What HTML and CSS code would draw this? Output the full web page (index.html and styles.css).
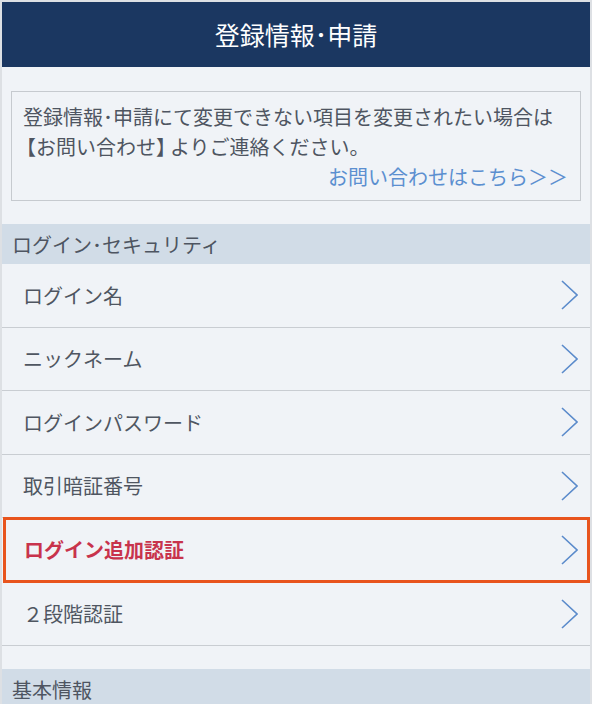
FILE: index.html
```html
<!DOCTYPE html>
<html lang="ja">
<head>
<meta charset="utf-8">
<title>登録情報・申請</title>
<link rel="stylesheet" href="styles.css">
</head>
<body>
<div class="frame">
  <header class="topbar">
    <h1 class="title">登録情報･申請</h1>
  </header>
  <main class="content">
    <div class="notice">
      <p class="notice-text">登録情報･申請にて変更できない項目を変更されたい場合は<span class="br-open">【</span>お問い合わせ<span class="br-close">】</span>よりご連絡ください。</p>
      <p class="notice-link"><a href="#">お問い合わせはこちら＞＞</a></p>
    </div>

    <div class="section-head">ログイン･セキュリティ</div>
    <ul class="menu">
      <li class="row"><span class="label">ログイン名</span><svg class="chev" viewBox="0 0 17 30" width="17" height="30"><polyline points="1,1 16,15 1,29"/></svg></li>
      <li class="row"><span class="label">ニックネーム</span><svg class="chev" viewBox="0 0 17 30" width="17" height="30"><polyline points="1,1 16,15 1,29"/></svg></li>
      <li class="row"><span class="label">ログインパスワード</span><svg class="chev" viewBox="0 0 17 30" width="17" height="30"><polyline points="1,1 16,15 1,29"/></svg></li>
      <li class="row"><span class="label">取引暗証番号</span><svg class="chev" viewBox="0 0 17 30" width="17" height="30"><polyline points="1,1 16,15 1,29"/></svg></li>
      <li class="row row-hl"><span class="label">ログイン追加認証</span><svg class="chev" viewBox="0 0 17 30" width="17" height="30"><polyline points="1,1 16,15 1,29"/></svg></li>
      <li class="row"><span class="label">２段階認証</span><svg class="chev" viewBox="0 0 17 30" width="17" height="30"><polyline points="1,1 16,15 1,29"/></svg></li>
    </ul>
    <div class="section-head">基本情報</div>
  </main>
</div>
</body>
</html>
```

FILE: styles.css
```css
* { box-sizing: border-box; }
html, body { margin: 0; padding: 0; }
body {
  background: #dde0e4;
  font-family: "Noto Sans CJK JP", "Noto Sans", sans-serif;
  padding: 2px 2px 0 2px;
  height: 704px;
  overflow: hidden;
}
.frame {
  width: 588px;
  background: #f0f3f7;
  min-height: 702px;
}
.topbar {
  background: #1b3761;
  height: 65px;
  display: flex;
  align-items: center;
  justify-content: center;
}
.title {
  margin: 0;
  color: #ffffff;
  font-size: 25px;
  font-weight: 400;
  line-height: 1;
}
.content { padding-top: 24px; }
.notice {
  margin: 0 9px;
  border: 1.5px solid #c6cacf;
  padding: 10px 12px 8px 11px;
  height: 110px;
}
.notice-text {
  margin: 0;
  font-size: 20px;
  line-height: 30px;
  color: #4e5561;
}
.br-open { margin-left: -7px; }
.br-close { letter-spacing: -6px; }
.notice-link {
  margin: 0;
  text-align: right;
  font-size: 20px;
  line-height: 29px;
}
.notice-link a {
  color: #5b8fd0;
  text-decoration: none;
}
.section-head {
  margin-top: 23px;
  background: #d1dce7;
  height: 40px;
  display: flex;
  align-items: center;
  padding-left: 10px;
  font-size: 20px;
  color: #4e5561;
}
.menu {
  list-style: none;
  margin: 0;
  padding: 0;
}
.row {
  height: 63.5px;
  border-bottom: 1.5px solid #c9cdd2;
  display: flex;
  align-items: center;
  justify-content: space-between;
  padding: 0 12px 0 21px;
}
.label {
  font-size: 20px;
  color: #4f5661;
}
.chev {
  display: block;
  fill: none;
  stroke: #5b8bcb;
  stroke-width: 1.6;
}
.row-hl {
  height: 66px;
  margin-top: -1.5px;
  margin-left: 1px;
  border: 3px solid #e8541d;
  padding: 0 9px 0 18px;
}
.row-hl .label {
  color: #c8334c;
  font-weight: 700;
}
```
